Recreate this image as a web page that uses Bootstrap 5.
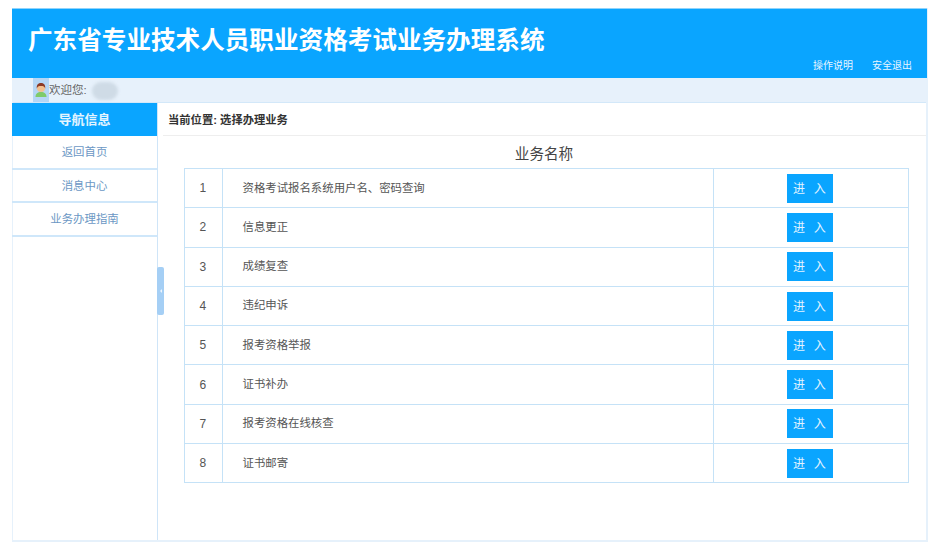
<!DOCTYPE html>
<html lang="zh-CN">
<head>
<meta charset="utf-8">
<title>广东省专业技术人员职业资格考试业务办理系统</title>
<link href="https://cdn.jsdelivr.net/npm/bootstrap@5.3.0/dist/css/bootstrap.min.css" rel="stylesheet">
<style>
html,body{height:100%;background:#fff;overflow:hidden}
body{font-family:"Liberation Sans","Noto Sans CJK SC",sans-serif;font-size:11px;color:#555;padding:8px 14px 14px 12px}
.shell{height:534px;width:916px;border:solid #e6f1fb;border-width:0 2px 2px 1px;display:flex;flex-direction:column}
.top-band{height:70px;background:#0aa5ff;color:#fff;position:relative;margin:0 -1px 0 -1px;padding:16px 0 0 16px;border-top:1px solid #8fd3fb}
.sys-title{font-size:24.6px;font-weight:700;line-height:32px;margin:0}
.top-links{position:absolute;right:15px;bottom:5px;display:flex;gap:19px;font-size:10px;line-height:14px}
.top-links a{color:#e8f5ff;text-decoration:none}
.user-band{height:25px;background:#e7f1fb;border-bottom:1px solid #d3e8f9;display:flex;align-items:stretch;padding-left:20px;font-size:11.5px;color:#666}
.avatar-box{width:16px;background:#b5d6f5;display:flex;align-items:center;justify-content:center}
.greet{line-height:25px}
.blur-name{width:26px;height:18px;margin:4px 0 0 5px;border-radius:9px;background:#cfdbe6;filter:blur(1.5px)}
.work{flex:1;display:flex;min-height:0}
.side{width:146px;flex:none;border-right:1px solid #cfe5f8;position:relative;margin-left:-1px;padding-left:1px}
.side-head{height:33px;background:#0aa5ff;color:#e3f4ff;font-size:13px;font-weight:700;text-align:center;line-height:33px;margin-left:-1px}
.side-item{display:block;height:33.5px;line-height:33px;text-align:center;border-bottom:2px solid #cfe7fa;color:#6b97c4;text-decoration:none;font-size:11.4px;margin-left:-1px}
.side-grip{position:absolute;right:-7px;top:164px;width:7px;height:48px;border-radius:2px;background:#a5cff5;display:flex;align-items:center;justify-content:center;z-index:2}
.side-grip i{display:block;border:2px solid transparent;border-right:2px solid #eef6fd;margin-left:-2px}
.main-pane{flex:1;min-width:0;display:flex;flex-direction:column}
.crumb{height:33px;line-height:34px;margin-left:5px;padding-left:5px;border-bottom:1px solid #eee;font-weight:700;font-size:11.3px;color:#333}
.biz-title{font-size:14.6px;line-height:18px;text-align:center;color:#444;margin:9px 0 5px;padding-left:4px}
.biz-wrap{padding:0 18px 0 26px}
table.biz{width:725px;table-layout:fixed;border-collapse:collapse;margin:0}
table.biz td{border:1px solid #c5e2f7;height:39.3px;padding:0;vertical-align:middle;font-size:11.4px;color:#555}
td.num{width:37.5px;text-align:center;font-size:12px!important;padding-right:1px!important}
td.name{padding-left:20px!important}
td.act{width:195.5px;text-align:center;padding-right:2px!important}
.go{display:inline-block;width:46px;height:29px;line-height:30px;padding:0;border:0;border-radius:0;background:#0aa5ff;color:#e3f4ff;font-size:12px;letter-spacing:.7px;vertical-align:middle}
.go:hover{background:#0aa5ff;color:#fff}
</style>
</head>
<body>
<div class="shell">
  <header class="top-band">
    <h1 class="sys-title">广东省专业技术人员职业资格考试业务办理系统</h1>
    <nav class="top-links"><a href="#">操作说明</a><a href="#">安全退出</a></nav>
  </header>
  <div class="user-band">
    <span class="avatar-box">
      <svg width="14" height="16" viewBox="0 0 14 16" aria-hidden="true">
        <path d="M1.5 15c0-3.5 2.2-5 5.5-5s5.500 1.500 5.500 5z" fill="#7ecb6a"/>
        <circle cx="7" cy="6" r="4" fill="#f3c08f"/>
        <path d="M2.800 6.500C2.300 2.700 4.500 1 7 1s4.700 1.700 4.200 5.500C10.500 4.500 9.500 4 7 4S3.500 4.500 2.800 6.500z" fill="#8c3a26"/>
      </svg>
    </span>
    <span class="greet">欢迎您:</span>
    <span class="blur-name"></span>
  </div>
  <div class="work">
    <aside class="side">
      <div class="side-head">导航信息</div>
      <a class="side-item" href="#">返回首页</a>
      <a class="side-item" href="#">消息中心</a>
      <a class="side-item" href="#">业务办理指南</a>
      <span class="side-grip"><i></i></span>
    </aside>
    <main class="main-pane">
      <div class="crumb">当前位置: 选择办理业务</div>
      <div class="biz-title">业务名称</div>
      <div class="biz-wrap">
        <table class="biz">
          <tbody>
            <tr><td class="num">1</td><td class="name">资格考试报名系统用户名、密码查询</td><td class="act"><a class="btn go" href="#">进&nbsp;&nbsp;入</a></td></tr>
            <tr><td class="num">2</td><td class="name">信息更正</td><td class="act"><a class="btn go" href="#">进&nbsp;&nbsp;入</a></td></tr>
            <tr><td class="num">3</td><td class="name">成绩复查</td><td class="act"><a class="btn go" href="#">进&nbsp;&nbsp;入</a></td></tr>
            <tr><td class="num">4</td><td class="name">违纪申诉</td><td class="act"><a class="btn go" href="#">进&nbsp;&nbsp;入</a></td></tr>
            <tr><td class="num">5</td><td class="name">报考资格举报</td><td class="act"><a class="btn go" href="#">进&nbsp;&nbsp;入</a></td></tr>
            <tr><td class="num">6</td><td class="name">证书补办</td><td class="act"><a class="btn go" href="#">进&nbsp;&nbsp;入</a></td></tr>
            <tr><td class="num">7</td><td class="name">报考资格在线核查</td><td class="act"><a class="btn go" href="#">进&nbsp;&nbsp;入</a></td></tr>
            <tr><td class="num">8</td><td class="name">证书邮寄</td><td class="act"><a class="btn go" href="#">进&nbsp;&nbsp;入</a></td></tr>
          </tbody>
        </table>
      </div>
    </main>
  </div>
</div>
<script src="https://cdn.jsdelivr.net/npm/bootstrap@5.3.0/dist/js/bootstrap.bundle.min.js"></script>
</body>
</html>
